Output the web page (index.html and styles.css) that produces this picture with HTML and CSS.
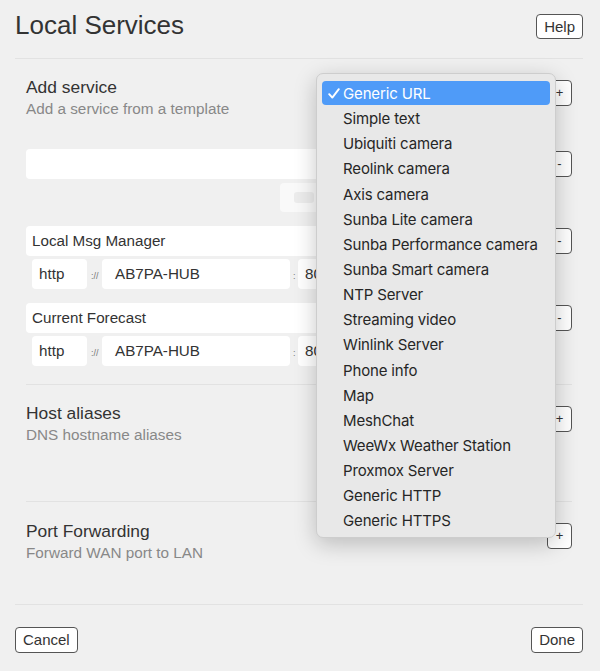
FILE: index.html
```html
<!DOCTYPE html>
<html>
<head>
<meta charset="utf-8">
<link rel="stylesheet" href="styles.css">
</head>
<body>
<div class="page">
  <header class="head">
    <h1 class="title">Local Services</h1>
    <button class="btn btn-help">Help</button>
  </header>

  <main class="content">
    <section class="sec sec-add">
      <div class="sec-head">
        <div class="sec-text">
          <div class="sec-title">Add service</div>
          <div class="sec-sub">Add a service from a template</div>
        </div>
        <button class="btn sq">+</button>
      </div>

      <div class="row new-row">
        <div class="field grow"></div>
        <button class="btn sq">-</button>
      </div>
      <div class="ghost-row"><div class="ghost"><span class="ghost-ico"></span></div></div>

      <div class="svc">
        <div class="row">
          <div class="field grow label">Local Msg Manager</div>
          <button class="btn sq">-</button>
        </div>
        <div class="url">
          <div class="field proto">http</div>
          <span class="sep">://</span>
          <div class="field host">AB7PA-HUB</div>
          <span class="sep colon">:</span>
          <div class="field port">80</div>
        </div>
      </div>

      <div class="svc">
        <div class="row">
          <div class="field grow label">Current Forecast</div>
          <button class="btn sq">-</button>
        </div>
        <div class="url">
          <div class="field proto">http</div>
          <span class="sep">://</span>
          <div class="field host">AB7PA-HUB</div>
          <span class="sep colon">:</span>
          <div class="field port">80</div>
        </div>
      </div>
    </section>

    <section class="sec sec-alias">
      <div class="sec-head">
        <div class="sec-text">
          <div class="sec-title">Host aliases</div>
          <div class="sec-sub">DNS hostname aliases</div>
        </div>
        <button class="btn sq">+</button>
      </div>
    </section>

    <section class="sec sec-port">
      <div class="sec-head">
        <div class="sec-text">
          <div class="sec-title">Port Forwarding</div>
          <div class="sec-sub">Forward WAN port to LAN</div>
        </div>
        <button class="btn sq">+</button>
      </div>
    </section>
  </main>

  <footer class="foot">
    <button class="btn">Cancel</button>
    <button class="btn">Done</button>
  </footer>

  <div class="menu">
    <div class="item sel"><svg class="check" width="12" height="11" viewBox="0 0 12 11"><path d="M1.2 6.2 L4.3 9.6 L10.8 1.2" fill="none" stroke="#fff" stroke-width="1.9" stroke-linecap="round" stroke-linejoin="round"/></svg>Generic URL</div>
    <div class="item">Simple text</div>
    <div class="item">Ubiquiti camera</div>
    <div class="item">Reolink camera</div>
    <div class="item">Axis camera</div>
    <div class="item">Sunba Lite camera</div>
    <div class="item">Sunba Performance camera</div>
    <div class="item">Sunba Smart camera</div>
    <div class="item">NTP Server</div>
    <div class="item">Streaming video</div>
    <div class="item">Winlink Server</div>
    <div class="item">Phone info</div>
    <div class="item">Map</div>
    <div class="item">MeshChat</div>
    <div class="item">WeeWx Weather Station</div>
    <div class="item">Proxmox Server</div>
    <div class="item">Generic HTTP</div>
    <div class="item">Generic HTTPS</div>
  </div>
</div>
</body>
</html>
```

FILE: styles.css
```css
* { box-sizing: border-box; }
html, body {
  margin: 0;
  padding: 0;
  background: #f0f0f0;
}
body {
  font-family: "Liberation Sans", Arial, sans-serif;
  color: #333;
}
.page {
  position: relative;
  width: 600px;
  height: 671px;
  padding: 0 17px 0 15px;
}
.head {
  display: flex;
  justify-content: space-between;
  align-items: flex-start;
  padding-top: 10px;
  padding-bottom: 18px;
  border-bottom: 1px solid #e2e2e2;
}
.title {
  margin: 0;
  font-size: 26px;
  line-height: 30px;
  font-weight: normal;
  color: #333;
}
.btn {
  font-family: "Liberation Sans", Arial, sans-serif;
  font-size: 15px;
  color: #333;
  background: #fff;
  border: 1px solid #555;
  border-radius: 4px;
  height: 26px;
  padding: 0 7px;
  line-height: 24px;
  margin: 0;
}
.btn-help {
  margin-top: 4px;
  height: 25px;
}
.sq {
  width: 25px;
  padding: 0;
  font-size: 13px;
  flex: none;
}
.content {
  padding: 0 11px;
}
.sec {
  padding-top: 18px;
  padding-bottom: 18px;
  border-top: 1px solid #e2e2e2;
}
.sec-add { border-top: none; padding-top: 18px; }
.sec-alias { padding-bottom: 57px; }
.sec-port { padding-top: 19px; padding-bottom: 42px; }
.sec-head {
  display: flex;
  justify-content: space-between;
  align-items: flex-start;
}
.sec-head .sq { margin-top: 3px; }
.sec-port .sec-head .sq { margin-top: 2px; }
.sec-title {
  font-size: 17.4px;
  line-height: 20px;
  color: #333;
}
.sec-sub {
  margin-top: 3px;
  font-size: 15.3px;
  line-height: 18px;
  color: #888;
}
.row {
  display: flex;
  align-items: center;
  gap: 6px;
}
.new-row { margin-top: 31px; }
.field {
  background: #fff;
  border-radius: 4px;
  height: 30px;
  font-size: 15.2px;
  line-height: 30px;
  color: #333;
}
.grow { flex: 1; }
.label { padding-left: 6px; }
.ghost-row {
  margin-top: 4px;
  padding-left: 254px;
}
.ghost {
  width: 80px;
  height: 29px;
  background: #f9f9f9;
  border-radius: 4px;
  padding: 9px 0 0 14px;
}
.ghost-ico {
  display: block;
  width: 20px;
  height: 11px;
  background: #ececec;
  border-radius: 3px;
}
.svc { margin-top: 14px; }
.url {
  margin-top: 3px;
  padding-left: 6px;
  display: flex;
  align-items: center;
}
.proto { width: 55px; padding-left: 7px; }
.sep {
  width: 15px;
  font-size: 9px;
  color: #777;
  padding-left: 4px;
  padding-top: 3px;
}
.colon { width: 8px; padding-left: 3px; }
.host { width: 188px; padding-left: 13px; }
.port { width: 70px; padding-left: 7px; }
.foot {
  display: flex;
  justify-content: space-between;
  border-top: 1px solid #e2e2e2;
  padding-top: 22px;
}
.menu {
  position: absolute;
  left: 316px;
  top: 73px;
  width: 240px;
  padding: 7px 5px 4px;
  background: #e8e8e8;
  border: 1px solid #cdcdcd;
  border-radius: 7px;
  box-shadow: 0 6px 22px rgba(0, 0, 0, 0.22);
  display: flex;
  flex-direction: column;
  gap: 1px;
  font-family: Inter, "Liberation Sans", sans-serif;
  font-size: 15px;
  letter-spacing: -0.15px;
  color: #262626;
}
.item {
  position: relative;
  height: 24.15px;
  line-height: 25px;
  padding-left: 21px;
  border-radius: 4px;
  white-space: nowrap;
}
.item.sel {
  background: #4f9bf8;
  color: #fff;
}
.check {
  position: absolute;
  left: 6px;
  top: 7px;
}
```
